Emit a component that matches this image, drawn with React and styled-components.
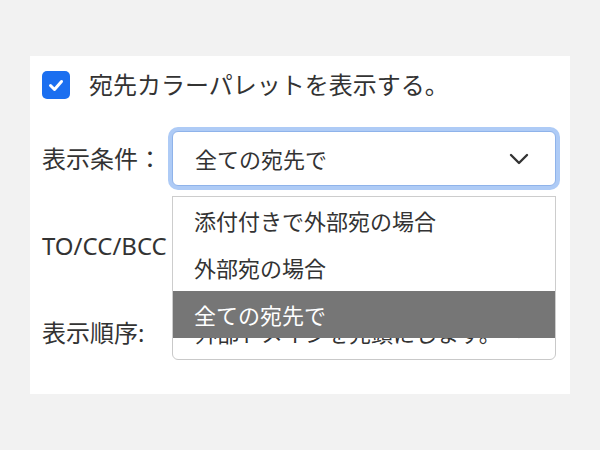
import React from "react";
import styled, { createGlobalStyle } from "styled-components";

const GlobalStyle = createGlobalStyle`
  body {
    margin: 0;
    background: #f2f2f2;
    font-family: "Noto Sans", "Noto Sans CJK JP", sans-serif;
    color: #333;
  }
`;

const Page = styled.div`
  padding: 56px 30px 0 30px;
`;

const Panel = styled.div`
  width: 540px;
  height: 338px;
  box-sizing: border-box;
  background: #fff;
  padding: 15px 14px 0 12px;
`;

const CheckRow = styled.label`
  display: flex;
  align-items: center;
  gap: 19px;
  height: 28px;
  margin-bottom: 32px;
  font-size: 24px;
  line-height: 28px;
`;

const Box = styled.span`
  display: flex;
  align-items: center;
  justify-content: center;
  width: 28px;
  height: 28px;
  border-radius: 5px;
  background: #1b6ff0;
  flex-shrink: 0;
`;

const Rows = styled.div`
  display: flex;
  flex-direction: column;
  gap: 32px;
`;

const Row = styled.div`
  display: grid;
  grid-template-columns: 130px 384px;
  align-items: center;
  height: 55px;
`;

const Label = styled.span`
  font-size: 24px;
  line-height: 30px;
  white-space: nowrap;
`;

const SelectWrap = styled.div`
  position: relative;
  z-index: ${(p) => (p.$open ? 2 : 1)};
`;

const SelectBox = styled.div`
  display: flex;
  align-items: center;
  justify-content: space-between;
  box-sizing: border-box;
  height: 55px;
  padding: 0 26px 0 22px;
  background: #fff;
  border: 1px solid ${(p) => (p.$focus ? "#8fb3ea" : "#c9c9c9")};
  border-radius: 6px;
  box-shadow: ${(p) => (p.$focus ? "0 0 0 4px #aecbf6" : "none")};
  font-size: 22px;
  line-height: 30px;
  white-space: nowrap;
`;

const Menu = styled.ul`
  position: absolute;
  top: 65px;
  left: 0;
  right: 0;
  margin: 0;
  padding: 0;
  list-style: none;
  background: #fff;
  border: 1px solid #cdcdcd;
  border-bottom: none;
`;

const Item = styled.li`
  height: 47px;
  display: flex;
  align-items: center;
  padding: 0 21px;
  font-size: 22px;
  line-height: 30px;
  background: ${(p) => (p.$active ? "#767676" : "#fff")};
  color: ${(p) => (p.$active ? "#fff" : "#333")};
`;

function Chevron() {
  return (
    <svg width="20" height="12" viewBox="0 0 20 12">
      <polyline
        points="2,2 10,10 18,2"
        fill="none"
        stroke="#333"
        strokeWidth="2.4"
        strokeLinecap="round"
        strokeLinejoin="round"
      />
    </svg>
  );
}

function Select({ value, focus, options }) {
  return (
    <SelectWrap $open={!!options}>
      <SelectBox $focus={focus}>
        <span>{value}</span>
        <Chevron />
      </SelectBox>
      {options && (
        <Menu>
          {options.map((o) => (
            <Item key={o} $active={o === value}>
              {o}
            </Item>
          ))}
        </Menu>
      )}
    </SelectWrap>
  );
}

export default function App() {
  return (
    <>
      <GlobalStyle />
      <Page>
        <Panel>
          <CheckRow>
            <Box>
              <svg width="28" height="28" viewBox="0 0 28 28">
                <polyline
                  points="8.5,14.5 12.5,18.5 19.5,10.5"
                  fill="none"
                  stroke="#fff"
                  strokeWidth="3"
                  strokeLinecap="round"
                  strokeLinejoin="round"
                />
              </svg>
            </Box>
            宛先カラーパレットを表示する。
          </CheckRow>
          <Rows>
            <Row>
              <Label>表示条件：</Label>
              <Select
                value="全ての宛先で"
                focus
                options={["添付付きで外部宛の場合", "外部宛の場合", "全ての宛先で"]}
              />
            </Row>
            <Row>
              <Label>TO/CC/BCC：</Label>
              <Select value="区別して表示します。" />
            </Row>
            <Row>
              <Label>表示順序:</Label>
              <Select value="外部ドメインを先頭にします。" />
            </Row>
          </Rows>
        </Panel>
      </Page>
    </>
  );
}
